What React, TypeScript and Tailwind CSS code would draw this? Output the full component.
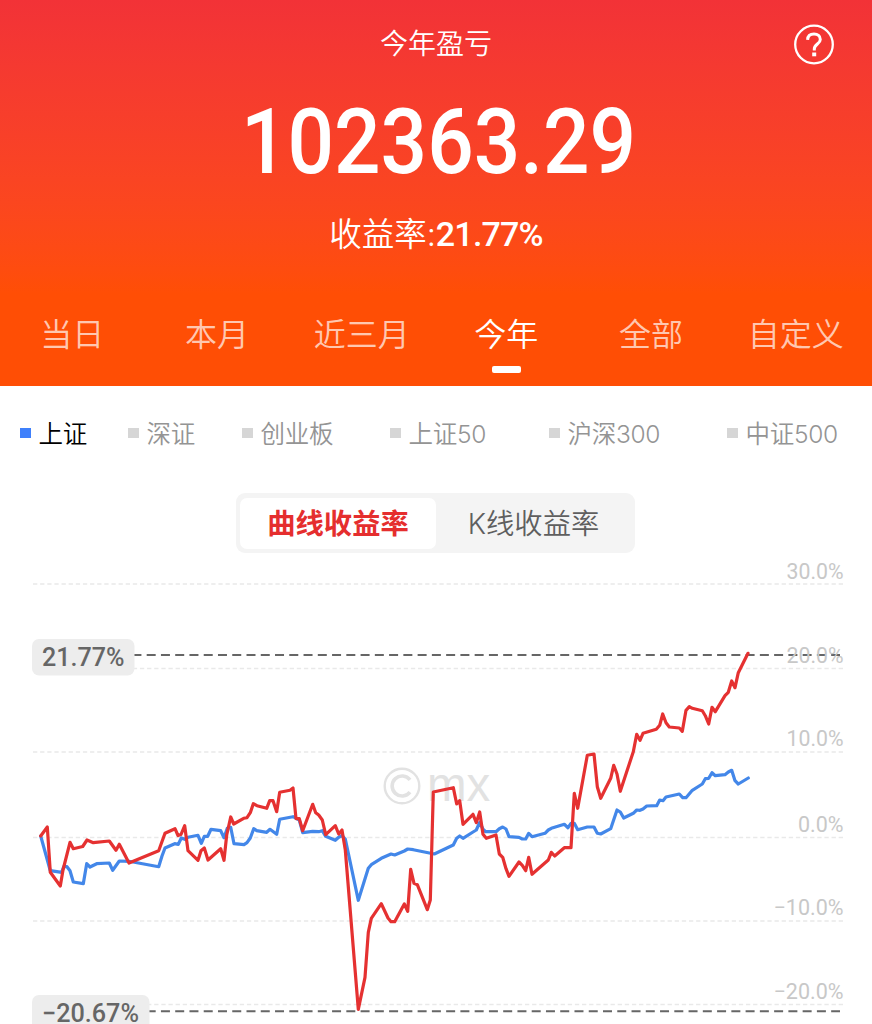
import React from "react";
import clsx from "clsx";

const tabs = ["当日", "本月", "近三月", "今年", "全部", "自定义"];
const activeTab = "今年";

const indexes = [
  { name: "上证", width: "w-[108px]" },
  { name: "深证", width: "w-[114px]" },
  { name: "创业板", width: "w-[148px]" },
  { name: "上证50", width: "w-[159px]" },
  { name: "沪深300", width: "w-[178px]" },
  { name: "中证500", width: "w-[120px]" },
];
const activeIndex = "上证";

const gridLines = [
  { y: 584, label: "30.0%", width: 57, baseline: 579 },
  { y: 668.5, label: "20.0%", width: 57, baseline: 662.5 },
  { y: 752, label: "10.0%", width: 57, baseline: 746 },
  { y: 837.5, label: "0.0%", width: 45.5, baseline: 831.5 },
  { y: 921, label: "−10.0%", width: 70, baseline: 915 },
  { y: 1004.5, label: "−20.0%", width: 70, baseline: 998.5 },
];

const profitLine =
  "40.7,836 47.3,827 50.3,872.3 60.3,886 63,870 70,842.3 73.3,848.7 82.7,846.5 87,840 93.3,842.7 109.3,841 116,850.3 119.3,844.3 129,863 158.7,850.7 165,833.3 175,828.7 178,835.5 181,834.5 184.7,825.7 188,850.7 198,860.3 201,850.7 204.3,848 208,860 220.7,848.7 224,860.3 226.7,835 230.7,817 233.7,824 243.7,818.3 247,817.7 250.3,812.7 253.3,803.7 257,805.7 266.7,808.3 269.7,800.7 273,800.7 276.7,811.7 279.7,792.3 290,790.3 293,788 296,818.7 299.3,818.7 302.7,830.7 312.7,804.3 315.7,812.7 318.7,815 322.3,820 325.7,834.7 335.3,825.7 338.7,834 342,830 345.3,850 358.3,1009.3 365,977.3 368.3,932.3 371.3,918.3 381.3,903.7 388,918 391,921.7 394.7,921.7 404.3,904 407.7,911.3 410.7,869.3 414,883.3 417.3,884.7 427.3,909.7 430.3,900 433.3,792 453.3,787.7 456.7,804 459.7,800.7 463,824.3 473,814.3 476.3,822.7 479.7,812 483,834.3 486.3,838.3 496,835 499.3,854 502.7,857.3 506,868.7 509,876.3 519,862 522.3,865.3 525.7,870.7 528.7,857.3 532,874.3 548.3,860 551.3,852.3 554.7,856 564.3,847.7 571,847.7 574.3,793.3 577.7,808.3 587.3,755.3 594,754 597.3,786.7 600.7,798.3 610.7,778.3 613.7,765.3 617,774 620.3,791.3 633.3,751.7 636.7,734.3 640,740.3 643,733.3 656.3,729.3 659.7,725.3 662.7,714 666,722.7 669.3,727 679.3,728 682.3,731.3 686,710.3 689.3,706.7 692.3,708.3 702.3,710.7 705.3,715.7 708.7,724 712,707.3 715.3,711.7 725,695.7 728.3,692.3 731.7,681 735,687.7 738.3,672.7 748,653.3";

const indexLine =
  "40.7,836 50.3,870.7 61.7,872.3 63.7,866.7 67,866.7 70,870.7 73.3,882 83.3,883.7 86.7,863.7 90,867 96.7,863.7 109.3,863 112.7,870.3 119.3,861 129,861.3 158.7,866.7 162,856 165,848 174.7,843.7 178.3,844.3 181.3,838 184.7,839.3 188,837.3 198,835.3 201.3,843.3 204.3,836.3 207.7,836.3 211,829.3 220.7,830.7 224,837.7 227.3,828.3 230.7,827.3 234,843.7 244,844.7 247,842.7 250.3,838 253.7,828.7 256.7,830.7 266.7,832.3 270,829.3 276.7,834.3 279.7,819.3 293,816.7 299.3,820 302.7,832.7 312.7,831.3 318.7,831.7 322.3,830.7 325.7,836.3 335.3,840.3 338.7,837.3 342,835.5 345.3,839 358.3,900.3 368.3,868.3 371.3,864.7 381.3,858.3 391,854 394.7,855 404.3,851 407.7,849 413.3,849.7 434.3,854 453.3,845 456.7,838.3 459.7,836 463,838.3 473,832 476.3,830 479.7,822.3 483,829.3 485.7,831.7 496,831.7 499.3,828.7 502.7,827 506,829 509,836.7 519,837.3 522.3,839 525.7,839 528.7,833.3 532,836.7 545,833.3 548.3,830 551.3,828.3 564.3,824.3 568,827.7 571,823.3 574.3,823.3 577.7,829.7 587.3,827 594,827 597.3,833.3 600.7,834 610.7,828.7 617,810 620.3,812 623.7,818 633.3,813.3 636.7,810 640,810.3 643,809 646.7,806 656.7,805.7 659.7,800 663,800.7 666,797 679.3,794 682.7,797.7 686,797.7 692.3,790.3 702.3,784 705.3,778.7 708.7,778.3 712,772.7 715.3,775.7 725,774.7 728.3,772 731.7,770.3 735,780.7 738.3,784 748.3,778";

const HelpIcon = () => (
  <svg width="42" height="42" viewBox="0 0 42 42" fill="none" stroke="white">
    <circle cx="21" cy="21.5" r="18.8" strokeWidth="2.3" />
    <path
      d="M14.6 16.8c.2-3.800 2.600-5.700 6.400-5.700 3.700 0 6.300 2 6.300 5.300 0 4.600-6 4.700-6 9.600v1.400"
      strokeWidth="3"
    />
    <path d="M21.200 29.500v3.800" strokeWidth="4" />
  </svg>
);

const Header = () => (
  <header className="relative flex h-[386px] flex-col items-center bg-linear-to-b from-[#f23237] to-[#ff4e05] to-76% text-white">
    <h1 className="mt-[23px] text-[28px] leading-[42px] font-[350]">今年盈亏</h1>
    <button className="absolute top-[23px] right-[37px]" aria-label="help">
      <HelpIcon />
    </button>
    <p className="mt-[27px] ml-[5px] origin-center scale-x-[0.9] font-[Roboto] text-[91px] leading-[100px] font-medium">
      102363.29
    </p>
    <p className="mt-[18px] flex items-baseline text-[32.5px] leading-[48px] font-[350]">
      收益率:
      <span className="font-[Roboto] text-[34px] font-medium tracking-[-0.8px]">
        21.77%
      </span>
    </p>
    <nav className="mt-[52px] grid w-[868px] grid-cols-6 self-start">
      {tabs.map((tab) => (
        <div key={tab} className="flex flex-col items-center">
          <span
            className={clsx(
              "text-[32px] leading-[48px] font-[350]",
              tab !== activeTab && "text-white/70"
            )}
          >
            {tab}
          </span>
          {tab === activeTab && (
            <span className="mt-[7px] h-[7px] w-[29px] rounded-[2px] bg-white" />
          )}
        </div>
      ))}
    </nav>
  </header>
);

const IndexLegend = () => (
  <div className="mt-[30px] flex pl-5">
    {indexes.map(({ name, width }) => (
      <div key={name} className={clsx("flex shrink-0 items-center gap-2", width)}>
        <span
          className={clsx(
            "mb-0.5 size-[10.5px]",
            name === activeIndex ? "bg-[#3f80fb]" : "bg-[#d6d6d6]"
          )}
        />
        <span
          className={clsx(
            "text-[24.5px] leading-9 font-[350] tracking-[-0.3px] whitespace-nowrap",
            name === activeIndex ? "text-black" : "text-[#949494]"
          )}
        >
          {name}
        </span>
      </div>
    ))}
  </div>
);

const ChartSwitch = () => (
  <div className="mt-[41px] ml-[236px] flex h-[60px] w-[399px] items-center rounded-[9px] bg-[#f4f4f4] px-1 text-[28.3px]">
    <button className="h-[51px] w-[196px] rounded-[7px] bg-white pt-0.5 font-bold text-[#e52e2e]">
      曲线收益率
    </button>
    <button className="h-[51px] flex-1 pt-0.5 font-[350] text-[#5f5f5f]">
      K线收益率
    </button>
  </div>
);

const Chart = () => (
  <svg
    className="block font-[Roboto]"
    width="872"
    height="471"
    viewBox="0 553 872 471"
    fill="none"
  >
    {/* watermark */}
    <g stroke="#e2e2e2">
      <circle cx="402" cy="786" r="17.3" strokeWidth="2.4" />
      <path d="M410 779.8a10 10 0 1 0 0 12.4" strokeWidth="3.6" />
    </g>
    <text
      x="427"
      y="801"
      fontSize="47.5"
      fill="#e2e2e2"
      className="font-['Liberation_Sans']"
    >
      mx
    </text>

    {gridLines.map(({ y }) => (
      <path
        key={y}
        d={`M33 ${y}H843`}
        stroke="#e9e9e9"
        strokeWidth="1.5"
        strokeDasharray="4.3 2.83"
      />
    ))}

    {/* high and low of the period */}
    <g stroke="#666" strokeWidth="2" strokeDasharray="9 5.26">
      <path d="M32.6 655H840" />
      <path d="M32.6 1011.3H840" />
    </g>

    <g strokeWidth="3.2" strokeLinejoin="round" strokeLinecap="round">
      <polyline points={indexLine} stroke="#4387e9" />
      <polyline points={profitLine} stroke="#e53131" />
    </g>

    <g fontSize="22" fill="#c8c8c8">
      {gridLines.map(({ label, width, baseline }) => (
        <text
          key={label}
          x={843.5 - width}
          y={baseline}
          textLength={width}
          lengthAdjust="spacingAndGlyphs"
        >
          {label}
        </text>
      ))}
    </g>

    <g fill="#ededed">
      <rect x="32" y="639" width="102.5" height="36.5" rx="7" />
      <rect x="32" y="995" width="117.5" height="36.500" rx="7" />
    </g>
    <g fontSize="25.5" fontWeight="480" fill="#666">
      <text x="42" y="666" textLength="82.5" lengthAdjust="spacingAndGlyphs">
        21.77%
      </text>
      <text x="42" y="1022" textLength="97" lengthAdjust="spacingAndGlyphs">
        −20.67%
      </text>
    </g>
  </svg>
);

const App: React.FC = () => {
  return (
    <main className="h-[1024px] w-[872px] overflow-hidden bg-white font-[Inter,'Noto_Sans_CJK_SC',sans-serif]">
      <Header />
      <IndexLegend />
      <ChartSwitch />
      <Chart />
    </main>
  );
};

export default App;
